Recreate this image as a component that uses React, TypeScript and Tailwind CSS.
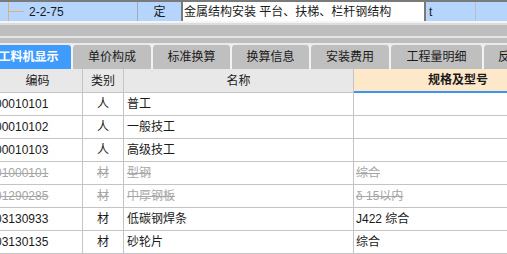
import React from "react";

const font = { fontFamily: '"Liberation Sans", "Noto Sans CJK SC", sans-serif' };

const tabs = ["工料机显示", "单价构成", "标准换算", "换算信息", "安装费用", "工程量明细", "反"];
const tabWidths = ["w-[85px]", "w-[78px]", "w-[77px]", "w-[77px]", "w-[78px]", "w-[91px]", "w-[40px]"];

const rows = [
  { code: "00010101", kind: "人", name: "普工", spec: "", off: false },
  { code: "00010102", kind: "人", name: "一般技工", spec: "", off: false },
  { code: "00010103", kind: "人", name: "高级技工", spec: "", off: false },
  { code: "01000101", kind: "材", name: "型钢", spec: "综合", off: true },
  { code: "01290285", kind: "材", name: "中厚钢板", spec: "δ 15以内", off: true },
  { code: "03130933", kind: "材", name: "低碳钢焊条", spec: "J422 综合", off: false },
  { code: "03130135", kind: "材", name: "砂轮片", spec: "综合", off: false },
];

export default function App() {
  return (
    <div className="w-[507px] h-[254px] overflow-hidden bg-white text-[12px] text-[#1a1a1a]" style={font}>
      {/* current quota row */}
      <div className="h-[2px] bg-[#7a7a7a]" />
      <div className="flex h-[19px] bg-[#b5d5fc]">
        <div className="relative w-[137px] flex items-center pl-[29px]">
          <span className="absolute left-[8px] top-0 h-full w-px bg-[#d8b27a]" />
          <span className="absolute left-[8px] top-[9px] w-[16px] h-px bg-[#d8b27a]" />
          2-2-75
        </div>
        <div className="w-px bg-[#a9a9a9]" />
        <div className="w-[43px] flex items-center justify-center">定</div>
        <div className="w-[245px] flex items-center bg-white border-x-2 border-[#7a7a7a] pl-px whitespace-nowrap overflow-hidden">
          金属结构安装 平台、扶梯、栏杆钢结构
        </div>
        <div className="w-[49px] flex items-center pl-[3px]">t</div>
        <div className="w-px bg-[#bdbdbd]" />
        <div className="flex-1" />
      </div>
      <div className="h-[2px] bg-[#f4f4f4]" />
      <div className="h-[2px] bg-[#dcdcdc]" />
      <div className="h-[11px] bg-[#bebebe]" />
      <div className="h-[2px] bg-[#e6e6e6]" />
      <div className="h-[5px] bg-[#bebebe]" />
      <div className="h-[2px] bg-[#ebebeb]" />

      {/* tabs */}
      <div className="flex h-[24px] gap-[2px] bg-[#f2f2f2] -ml-[14px]">
        {tabs.map((t, i) => (
          <div
            key={t}
            className={`${tabWidths[i]} shrink-0 flex items-center justify-center rounded-t-[3px] text-[12px] whitespace-nowrap overflow-hidden ${
              i === 0 ? "bg-[#3f9cfd] text-white font-bold" : "bg-[#bfbfbf] text-[#1a1a1a]"
            }`}
          >
            {t}
          </div>
        ))}
      </div>

      {/* grid */}
      <div className="-ml-[7px]">
        <div className="flex h-[24px] bg-[#e8e8e8] border-b border-[#c4c4c4]">
          <div className="w-[90px] shrink-0 flex items-center justify-center border-r border-[#c4c4c4]">编码</div>
          <div className="w-[41px] shrink-0 flex items-center justify-center border-r border-[#c4c4c4]">类别</div>
          <div className="w-[230px] shrink-0 flex items-center justify-center border-r border-[#c4c4c4]">名称</div>
          <div className="w-[208px] shrink-0 flex items-center justify-center bg-[#fde8ca] border-b-2 border-[#3d94ee] -mb-px font-bold">
            规格及型号
          </div>
        </div>
        {rows.map((r) => (
          <div
            key={r.code}
            className={`flex h-[23px] border-b border-[#c4c4c4] ${r.off ? "text-[#a6a6a6] line-through" : ""}`}
          >
            <div className="w-[90px] shrink-0 flex items-center pl-[2px] border-r border-[#c4c4c4]">{r.code}</div>
            <div className="w-[41px] shrink-0 flex items-center justify-center border-r border-[#c4c4c4]">{r.kind}</div>
            <div className="w-[230px] shrink-0 flex items-center pl-[3px] border-r border-[#c4c4c4]">{r.name}</div>
            <div className="w-[208px] shrink-0 flex items-center pl-[2px]">{r.spec}</div>
          </div>
        ))}
      </div>
    </div>
  );
}
